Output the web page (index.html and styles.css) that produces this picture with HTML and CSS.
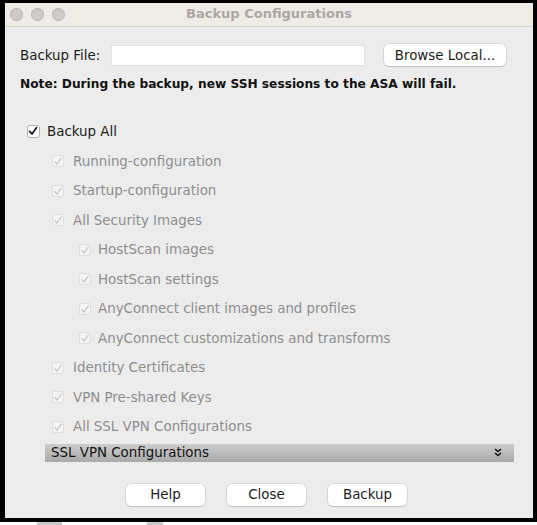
FILE: index.html
```html
<!DOCTYPE html>
<html>
<head>
<meta charset="utf-8">
<title>Backup Configurations</title>
<link rel="stylesheet" href="styles.css">
</head>
<body>
<div class="window">
  <div class="titlebar">
    <div class="lights">
      <span class="light"></span><span class="light"></span><span class="light"></span>
    </div>
    <div class="title">Backup Configurations</div>
  </div>
  <div class="content">
    <div class="file-row">
      <span class="file-label">Backup File:</span>
      <span class="file-input"></span>
      <span class="btn browse">Browse Local...</span>
    </div>
    <div class="note">Note: During the backup, new SSH sessions to the ASA will fail.</div>
    <div class="tree">
      <div class="row lvl0"><span class="cb on"><svg viewBox="0 0 12 12"><path d="M2.6 6.4 L5 9 L9.6 2.6" /></svg></span><span class="lbl">Backup All</span></div>
      <div class="row lvl1 dis"><span class="cb"><svg viewBox="0 0 12 12"><path d="M2.8 6.6 L5 9 L9.4 3" /></svg></span><span class="lbl">Running-configuration</span></div>
      <div class="row lvl1 dis"><span class="cb"><svg viewBox="0 0 12 12"><path d="M2.8 6.6 L5 9 L9.4 3" /></svg></span><span class="lbl">Startup-configuration</span></div>
      <div class="row lvl1 dis"><span class="cb"><svg viewBox="0 0 12 12"><path d="M2.8 6.6 L5 9 L9.4 3" /></svg></span><span class="lbl">All Security Images</span></div>
      <div class="row lvl2 dis"><span class="cb"><svg viewBox="0 0 12 12"><path d="M2.8 6.6 L5 9 L9.4 3" /></svg></span><span class="lbl">HostScan images</span></div>
      <div class="row lvl2 dis"><span class="cb"><svg viewBox="0 0 12 12"><path d="M2.8 6.6 L5 9 L9.4 3" /></svg></span><span class="lbl">HostScan settings</span></div>
      <div class="row lvl2 dis"><span class="cb"><svg viewBox="0 0 12 12"><path d="M2.8 6.6 L5 9 L9.4 3" /></svg></span><span class="lbl">AnyConnect client images and profiles</span></div>
      <div class="row lvl2 dis"><span class="cb"><svg viewBox="0 0 12 12"><path d="M2.8 6.6 L5 9 L9.4 3" /></svg></span><span class="lbl">AnyConnect customizations and transforms</span></div>
      <div class="row lvl1 dis"><span class="cb"><svg viewBox="0 0 12 12"><path d="M2.8 6.6 L5 9 L9.4 3" /></svg></span><span class="lbl">Identity Certificates</span></div>
      <div class="row lvl1 dis"><span class="cb"><svg viewBox="0 0 12 12"><path d="M2.8 6.6 L5 9 L9.4 3" /></svg></span><span class="lbl">VPN Pre-shared Keys</span></div>
      <div class="row lvl1 dis"><span class="cb"><svg viewBox="0 0 12 12"><path d="M2.8 6.6 L5 9 L9.4 3" /></svg></span><span class="lbl">All SSL VPN Configurations</span></div>
    </div>
    <div class="section-bar">
      <span>SSL VPN Configurations</span>
      <svg class="chev" viewBox="0 0 8 9"><path d="M1 1 L4 3.6 L7 1 M1 5 L4 7.6 L7 5" /></svg>
    </div>
    <div class="buttons">
      <span class="btn">Help</span>
      <span class="btn">Close</span>
      <span class="btn">Backup</span>
    </div>
  </div>
</div>
<div class="below">
  <span class="bit bit1"></span>
  <span class="bit bit2"></span>
</div>
</body>
</html>
```
FILE: styles.css
```css
html, body {
  margin: 0;
  padding: 0;
  background: #ffffff;
}
body {
  font-family: "DejaVu Sans", "Liberation Sans", sans-serif;
  font-size: 13.4px;
  color: #1c1c1c;
  width: 537px;
  overflow: hidden;
}
.window {
  box-sizing: border-box;
  width: 537px;
  height: 522px;
  border-style: solid;
  border-color: #000;
  border-width: 3px 4px 4px 5px;
  background: #ececec;
  display: flex;
  flex-direction: column;
}
.titlebar {
  height: 23px;
  flex: none;
  background: #efebe7;
  border-bottom: 1px solid #d4d1ce;
  display: flex;
  align-items: center;
  position: relative;
}
.lights {
  display: flex;
  gap: 8px;
  padding-left: 5px;
}
.light {
  width: 13px;
  height: 13px;
  border-radius: 50%;
  background: #cfcbc8;
  box-shadow: inset 0 0 0 1px #bdb9b5;
}
.title {
  position: absolute;
  left: 0;
  right: 0;
  top: 0;
  line-height: 21px;
  text-align: center;
  font-weight: bold;
  font-size: 13px;
  color: #aca7a2;
}
.content {
  padding: 17px 0 0 15px;
  flex: 1;
}
.file-row {
  display: flex;
  align-items: center;
  height: 22px;
}
.file-label {
  width: 91px;
}
.file-input {
  width: 254px;
  height: 21px;
  background: #fff;
  box-shadow: inset 0 0 0 1px #e2e2e2;
  margin-right: 19px;
}
.btn {
  display: inline-flex;
  align-items: center;
  justify-content: center;
  box-sizing: border-box;
  height: 22px;
  background: #fff;
  border-radius: 5px;
  box-shadow: 0 0 0 0.5px #c4c4c4, 0 1px 1px rgba(0,0,0,0.18);
  color: #1c1c1c;
}
.browse {
  width: 122px;
}
.note {
  font-weight: bold;
  font-size: 12.2px;
  margin-top: 10px;
  line-height: 16px;
  color: #111;
}
.tree {
  margin-top: 25px;
}
.row {
  height: 29.5px;
  display: flex;
  align-items: center;
}
.lvl0 { padding-left: 7px; }
.lvl1 { padding-left: 32px; }
.lvl2 { padding-left: 59px; }
.cb {
  box-sizing: border-box;
  width: 12px;
  height: 12px;
  border-radius: 2px;
  background: #fff;
  box-shadow: inset 0 0 0 1px #b4b4b4;
  display: inline-flex;
  margin-right: 8px;
  flex: none;
}
.cb.on {
  width: 13px;
  height: 13px;
  border-radius: 3px;
  margin-right: 7px;
}
.cb svg {
  width: 12px;
  height: 12px;
}
.cb path {
  fill: none;
  stroke: #111;
  stroke-width: 1.7;
  stroke-linecap: round;
  stroke-linejoin: round;
}
.lvl0 .lbl { color: #1c1c1c; }
.dis .cb {
  background: #f4f4f4;
  box-shadow: inset 0 0 0 1px #dedede;
}
.dis .cb path {
  stroke: #c2c2c2;
  stroke-width: 1.2;
}
.dis .lbl {
  color: #8e8e8e;
}
.lvl1 .cb { margin-right: 9px; }
.lvl2 .cb { margin-right: 7px; }
.section-bar {
  margin-top: 2px;
  margin-left: 25px;
  width: 469px;
  height: 18px;
  background: linear-gradient(#cdcdcd, #a9a9a9);
  display: flex;
  align-items: center;
  justify-content: space-between;
  padding: 0 12px 0 6px;
  box-sizing: border-box;
  color: #111;
}
.chev {
  width: 8px;
  height: 9px;
}
.chev path {
  fill: none;
  stroke: #111;
  stroke-width: 1.5;
}
.buttons {
  display: flex;
  gap: 22px;
  margin-top: 22px;
  margin-left: 106px;
}
.buttons .btn {
  width: 79px;
}
.below {
  height: 3px;
  position: relative;
}
.bit {
  position: absolute;
  top: 0;
  height: 3px;
  background: #c9c9c9;
}
.bit1 { left: 37px; width: 25px; }
.bit2 { left: 147px; width: 16px; }
```
